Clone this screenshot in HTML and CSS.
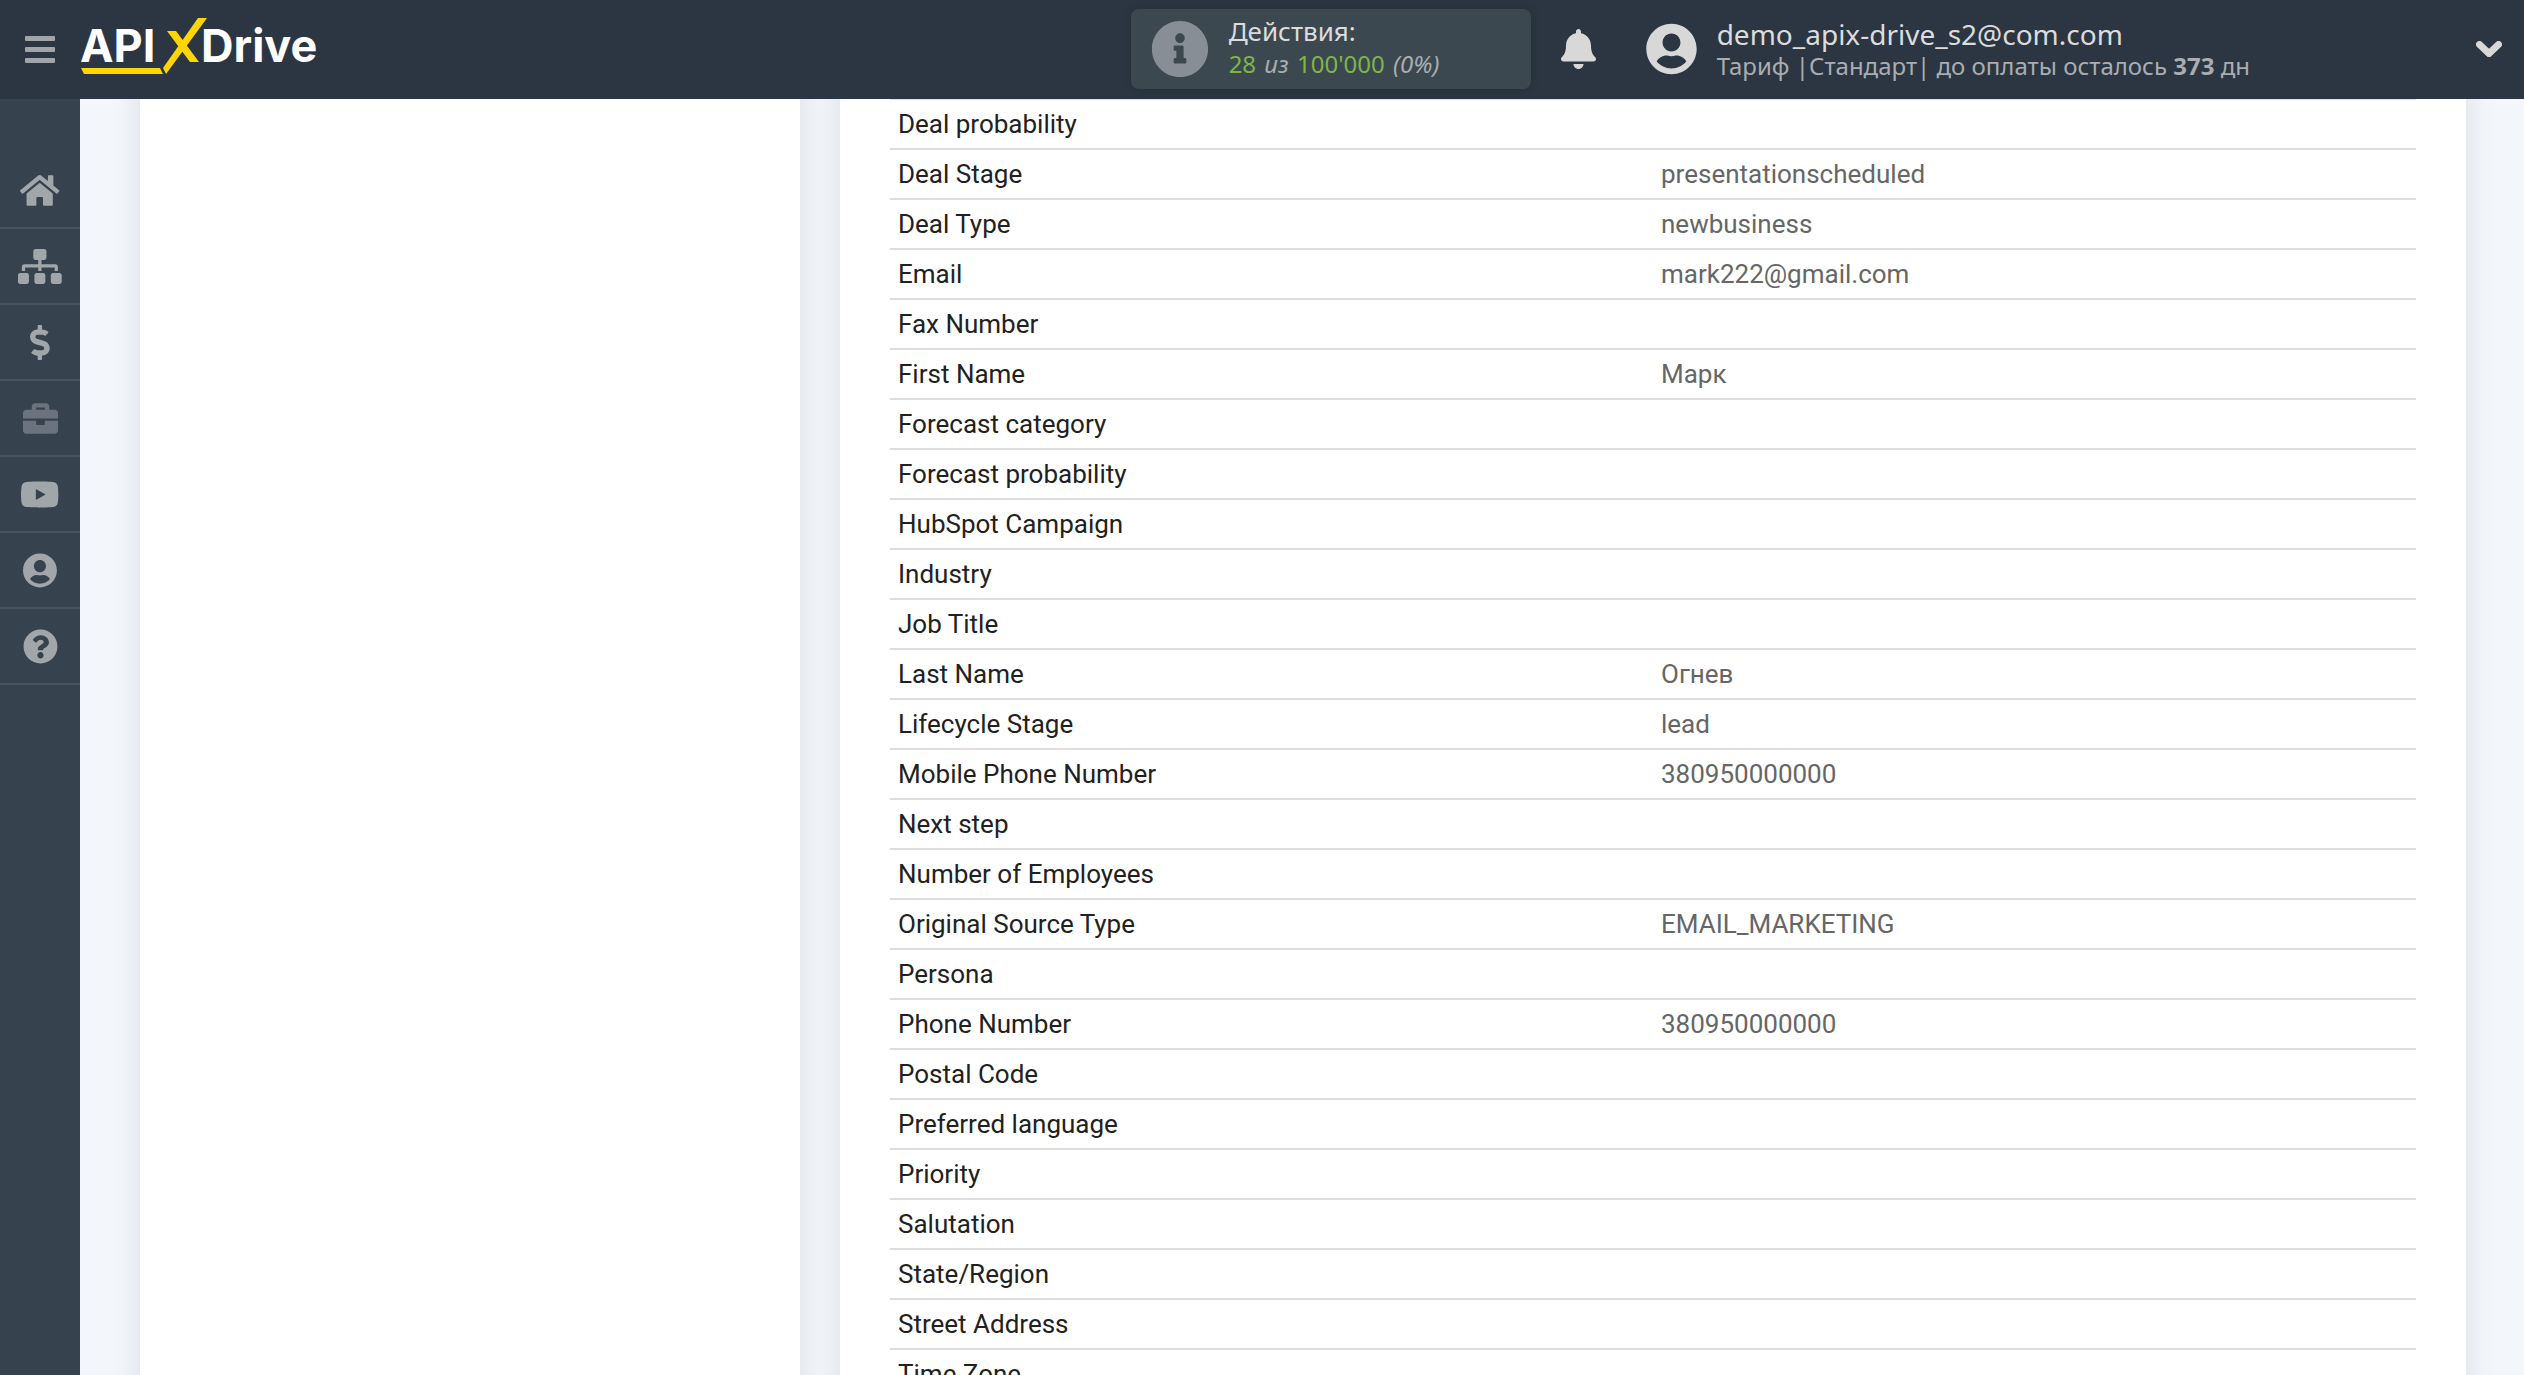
FILE: index.html
```html
<!DOCTYPE html>
<html lang="ru">
<head>
<meta charset="utf-8">
<meta name="viewport" content="width=device-width, initial-scale=1">
<title>APIXDrive</title>
<link rel="stylesheet" href="styles.css">
</head>
<body>
<div class="app">
  <header class="topbar">
    <div class="brand">
      <button class="burger" type="button" aria-label="Меню"><span></span><span></span><span></span></button>
      <a class="logo" href="#" aria-label="APIXDrive">
        <svg width="244" height="64" viewBox="0 0 244 64">
          <text class="logo-text" x="-1" y="45">API</text>
          <text class="logo-text" x="120" y="45">Drive</text>
          <path fill="#ffd600" d="M117 1h9L85 57l-3-6z"/>
          <path fill="#ffd600" d="M86 14h9l23 31h-9z"/>
          <path fill="#ffd600" d="M0 51h79l3 6H3z"/>
        </svg>
      </a>
    </div>
    <div class="usage">
      <svg class="usage-icon" viewBox="0 0 512 512"><path d="M256 8C119.043 8 8 119.083 8 256c0 136.997 111.043 248 248 248s248-111.003 248-248C504 119.083 392.957 8 256 8zm0 110c23.196 0 42 18.804 42 42s-18.804 42-42 42-42-18.804-42-42 18.804-42 42-42zm56 254c0 6.627-5.373 12-12 12h-88c-6.627 0-12-5.373-12-12v-24c0-6.627 5.373-12 12-12h12v-64h-12c-6.627 0-12-5.373-12-12v-24c0-6.627 5.373-12 12-12h64c6.627 0 12 5.373 12 12v100h12c6.627 0 12 5.373 12 12v24z"/></svg>
      <div class="usage-text">
        <div class="line-main">Действия:</div>
        <div class="line-sub"><b class="num">28</b> <i>из</i> <b class="num">100'000</b> <i>(0%)</i></div>
      </div>
    </div>
    <button class="bell" type="button" aria-label="Уведомления">
      <svg viewBox="0 0 448 512"><path d="M224 512c35.32 0 63.97-28.65 63.97-64H160.03c0 35.35 28.65 64 63.97 64zm215.39-149.71c-19.32-20.76-55.47-51.99-55.47-154.29 0-77.7-54.48-139.9-127.94-155.16V32c0-17.67-14.32-32-31.98-32s-31.98 14.33-31.98 32v20.84C118.56 68.1 64.08 130.3 64.08 208c0 102.3-36.15 133.53-55.47 154.29-6 6.45-8.66 14.16-8.61 21.71.11 16.4 12.98 32 32.1 32h383.8c19.12 0 32-15.6 32.1-32 .05-7.55-2.61-15.27-8.61-21.71z"/></svg>
    </button>
    <div class="account">
      <svg class="avatar" viewBox="0 0 496 512"><path d="M248 8C111 8 0 119 0 256s111 248 248 248 248-111 248-248S385 8 248 8zm0 96c48.6 0 88 39.4 88 88s-39.4 88-88 88-88-39.4-88-88 39.4-88 88-88zm0 344c-58.7 0-111.3-26.6-146.5-68.2 18.8-35.4 55.6-59.8 98.5-59.8 2.4 0 4.8.4 7.1 1.1 13 4.2 26.6 6.9 40.9 6.9 14.3 0 28-2.7 40.9-6.9 2.3-.7 4.7-1.1 7.1-1.1 42.9 0 79.7 24.4 98.5 59.8C359.3 421.4 306.7 448 248 448z"/></svg>
      <div class="account-text">
        <div class="line-main account-name">demo_apix-drive_s2@com.com</div>
        <div class="line-sub">Тариф |Стандарт| до оплаты осталось <strong>373</strong> дн</div>
      </div>
    </div>
    <button class="toggle" type="button" aria-label="Развернуть">
      <svg width="26" height="16" viewBox="0 0 26 16"><path d="M3.500 3.500L13 12.500l9.500-9" fill="none" stroke="#d8d8d8" stroke-width="7" stroke-linecap="round" stroke-linejoin="miter"/></svg>
    </button>
  </header>
  <div class="body">
    <nav class="sidebar" aria-label="Разделы">
      <a href="#" aria-label="Главная"><svg viewBox="0 0 576 512"><path d="M280.37 148.26L96 300.11V464a16 16 0 0 0 16 16l112.06-.29a16 16 0 0 0 15.92-16V368a16 16 0 0 1 16-16h64a16 16 0 0 1 16 16v95.64a16 16 0 0 0 16 16.05L464 480a16 16 0 0 0 16-16V300L295.67 148.26a12.19 12.19 0 0 0-15.3 0zM571.6 251.47L488 182.56V44.05a12 12 0 0 0-12-12h-56a12 12 0 0 0-12 12v72.61L318.47 43a48 48 0 0 0-61 0L4.34 251.47a12 12 0 0 0-1.6 16.9l25.5 31A12 12 0 0 0 45.15 301l235.22-193.74a12.19 12.19 0 0 1 15.3 0L530.9 301a12 12 0 0 0 16.9-1.6l25.5-31a12 12 0 0 0-1.7-16.93z"/></svg></a>
      <a href="#" aria-label="Связи"><svg viewBox="0 0 640 512"><path d="M128 352H32c-17.67 0-32 14.33-32 32v96c0 17.67 14.33 32 32 32h96c17.67 0 32-14.33 32-32v-96c0-17.67-14.33-32-32-32zm-24-80h192v48h48v-48h192v48h48v-57.59c0-21.17-17.23-38.41-38.41-38.41H344v-64h40c17.67 0 32-14.33 32-32V32c0-17.67-14.33-32-32-32H256c-17.67 0-32 14.33-32 32v96c0 17.67 14.33 32 32 32h40v64H94.41C73.23 224 56 241.23 56 262.41V320h48v-48zm264 80h-96c-17.67 0-32 14.33-32 32v96c0 17.67 14.33 32 32 32h96c17.67 0 32-14.33 32-32v-96c0-17.67-14.33-32-32-32zm240 0h-96c-17.67 0-32 14.33-32 32v96c0 17.67 14.33 32 32 32h96c17.67 0 32-14.33 32-32v-96c0-17.67-14.33-32-32-32z"/></svg></a>
      <a href="#" aria-label="Тарифы"><svg viewBox="0 0 288 512"><path d="M209.2 233.4l-108-31.6C88.700 198.200 80 186.500 80 173.500c0-16.300 13.200-29.500 29.500-29.500h66.300c12.200 0 24.200 3.700 34.200 10.500 6.100 4.100 14.300 3.100 19.500-2l34.800-34c7.100-6.900 6.100-18.400-1.800-24.500C238 74.800 207.400 64.100 176 64V16c0-8.800-7.200-16-16-16h-32c-8.800 0-16 7.200-16 16v48h-2.500C45.800 64-5.400 118.700.5 183.600c4.200 46.100 39.400 83.600 83.800 96.600l102.500 30c12.500 3.700 21.200 15.300 21.200 28.300 0 16.300-13.200 29.500-29.500 29.500h-66.300C100 368 88 364.300 78 357.500c-6.100-4.100-14.300-3.100-19.500 2l-34.800 34c-7.100 6.900-6.100 18.400 1.800 24.500 24.500 19.200 55.100 29.900 86.500 30v48c0 8.800 7.200 16 16 16h32c8.800 0 16-7.200 16-16v-48.200c46.600-.9 90.300-28.600 105.700-72.700 21.500-61.600-14.600-124.800-72.500-141.700z"/></svg></a>
      <a class="muted" href="#" aria-label="Проекты"><svg viewBox="0 0 512 512"><path d="M320 336c0 8.840-7.160 16-16 16h-96c-8.840 0-16-7.160-16-16v-48H0v144c0 25.600 22.400 48 48 48h416c25.600 0 48-22.400 48-48V288H320v48zm144-208h-80V80c0-25.600-22.400-48-48-48H176c-25.600 0-48 22.400-48 48v48H48c-25.600 0-48 22.400-48 48v80h512v-80c0-25.600-22.400-48-48-48zm-144 0H192V96h128v32z"/></svg></a>
      <a href="#" aria-label="Видео"><svg viewBox="0 0 576 512"><path d="M549.655 124.083c-6.281-23.650-24.787-42.276-48.284-48.597C458.781 64 288 64 288 64S117.220 64 74.629 75.486c-23.497 6.322-42.003 24.947-48.284 48.597-11.412 42.867-11.412 132.305-11.412 132.305s0 89.438 11.412 132.305c6.281 23.650 24.787 41.500 48.284 47.821C117.220 448 288 448 288 448s170.780 0 213.371-11.486c23.497-6.321 42.003-24.171 48.284-47.821 11.412-42.867 11.412-132.305 11.412-132.305s0-89.438-11.412-132.305zm-317.510 213.508V175.185l142.739 81.205-142.739 81.201z"/></svg></a>
      <a href="#" aria-label="Профиль"><svg viewBox="0 0 496 512"><path d="M248 8C111 8 0 119 0 256s111 248 248 248 248-111 248-248S385 8 248 8zm0 96c48.6 0 88 39.4 88 88s-39.4 88-88 88-88-39.4-88-88 39.4-88 88-88zm0 344c-58.7 0-111.3-26.6-146.5-68.2 18.8-35.4 55.6-59.8 98.5-59.8 2.4 0 4.8.4 7.1 1.1 13 4.2 26.6 6.9 40.9 6.9 14.3 0 28-2.7 40.9-6.9 2.3-.7 4.7-1.1 7.1-1.1 42.9 0 79.7 24.4 98.5 59.8C359.3 421.4 306.7 448 248 448z"/></svg></a>
      <a href="#" aria-label="Помощь"><svg viewBox="0 0 512 512"><path d="M504 256c0 136.997-111.043 248-248 248S8 392.997 8 256C8 119.083 119.043 8 256 8s248 111.083 248 248zM262.655 90c-54.497 0-89.255 22.957-116.549 63.758-3.536 5.286-2.353 12.415 2.715 16.258l34.699 26.310c5.205 3.947 12.621 3.008 16.665-2.122 17.864-22.658 30.113-35.797 57.303-35.797 20.429 0 45.698 13.148 45.698 32.958 0 14.976-12.363 22.667-32.534 33.976C247.128 238.528 216 254.941 216 296v4c0 6.627 5.373 12 12 12h56c6.627 0 12-5.373 12-12v-1.333c0-28.462 83.186-29.647 83.186-106.667 0-58.002-60.165-102-116.531-102zM256 338c-25.365 0-46 20.635-46 46 0 25.364 20.635 46 46 46s46-20.636 46-46c0-25.364-20.635-46-46-46z"/></svg></a>
    </nav>
    <main class="content">
      <section class="card"></section>
      <section class="card card-data">
        <table class="fields">
          <tbody>
            <tr><th scope="row">Deal probability</th><td></td></tr>
            <tr><th scope="row">Deal Stage</th><td>presentationscheduled</td></tr>
            <tr><th scope="row">Deal Type</th><td>newbusiness</td></tr>
            <tr><th scope="row">Email</th><td>mark222@gmail.com</td></tr>
            <tr><th scope="row">Fax Number</th><td></td></tr>
            <tr><th scope="row">First Name</th><td>Марк</td></tr>
            <tr><th scope="row">Forecast category</th><td></td></tr>
            <tr><th scope="row">Forecast probability</th><td></td></tr>
            <tr><th scope="row">HubSpot Campaign</th><td></td></tr>
            <tr><th scope="row">Industry</th><td></td></tr>
            <tr><th scope="row">Job Title</th><td></td></tr>
            <tr><th scope="row">Last Name</th><td>Огнев</td></tr>
            <tr><th scope="row">Lifecycle Stage</th><td>lead</td></tr>
            <tr><th scope="row">Mobile Phone Number</th><td>380950000000</td></tr>
            <tr><th scope="row">Next step</th><td></td></tr>
            <tr><th scope="row">Number of Employees</th><td></td></tr>
            <tr><th scope="row">Original Source Type</th><td>EMAIL_MARKETING</td></tr>
            <tr><th scope="row">Persona</th><td></td></tr>
            <tr><th scope="row">Phone Number</th><td>380950000000</td></tr>
            <tr><th scope="row">Postal Code</th><td></td></tr>
            <tr><th scope="row">Preferred language</th><td></td></tr>
            <tr><th scope="row">Priority</th><td></td></tr>
            <tr><th scope="row">Salutation</th><td></td></tr>
            <tr><th scope="row">State/Region</th><td></td></tr>
            <tr><th scope="row">Street Address</th><td></td></tr>
            <tr><th scope="row">Time Zone</th><td></td></tr>
          </tbody>
        </table>
      </section>
    </main>
  </div>
</div>
</body>
</html>
```
FILE: styles.css
```css
* { box-sizing: border-box; }

body {
  margin: 0;
  background: #f3f6fb;
  font-family: Roboto, "Liberation Sans", sans-serif;
}

svg { display: block; }

button {
  padding: 0;
  border: 0;
  background: none;
  cursor: pointer;
}

.app {
  display: flex;
  flex-direction: column;
  height: 100vh;
  overflow: hidden;
}

/* Top bar */
.topbar {
  position: relative;
  z-index: 1;
  display: flex;
  align-items: center;
  flex: none;
  height: 99px;
  padding: 0 22px 1px 0;
  background: #2b3642;
  font-family: "Noto Sans", "Open Sans", sans-serif;
}

.brand {
  display: flex;
  align-items: center;
  gap: 26px;
  flex: 1;
  padding-left: 25px;
}

.burger {
  display: grid;
  gap: 6px;
  width: 30px;
}

.burger span {
  height: 5px;
  border-radius: 1px;
  background: #a1a5aa;
}

.logo-text {
  fill: #fff;
  font-family: Inter, sans-serif;
  font-size: 45px;
  font-weight: 700;
}

.usage {
  display: flex;
  align-items: center;
  gap: 20px;
  width: 400px;
  height: 80px;
  padding: 0 20px;
  border-radius: 8px;
  background: #3b4850;
  box-shadow: 0 0 10px rgba(0, 0, 0, .15);
}

.usage-icon {
  width: 58px;
  height: 58px;
  fill: #878e96;
}

.usage-text { padding-bottom: 4px; }

.line-main {
  color: #dcdcdc;
  font-size: 26px;
  line-height: 34px;
  white-space: nowrap;
}

.line-sub {
  color: #a9adb1;
  font-size: 24px;
  line-height: 32px;
  white-space: nowrap;
}

.line-sub i { margin: 0 2px; }

.num {
  color: #7fb548;
  font-weight: 400;
}

.bell { margin-left: 30px; }

.bell svg {
  width: 35px;
  height: 40px;
  fill: #d8d8d8;
}

.account {
  display: flex;
  align-items: center;
  gap: 20px;
  margin-left: 50px;
}

.account-name {
  font-size: 28px;
  line-height: 32px;
}

.account-text { padding-top: 2px; }

.avatar {
  width: 51px;
  height: 52px;
  fill: #d8d8d8;
}

.toggle { margin-left: 226px; }

/* Side navigation */
.body {
  display: flex;
  flex: 1;
  min-height: 0;
}

.sidebar {
  flex: none;
  width: 80px;
  padding-top: 54px;
  background: #37424f;
}

.sidebar a {
  display: flex;
  align-items: center;
  justify-content: center;
  height: 76px;
  border-bottom: 2px solid #4a5561;
}

.sidebar svg {
  height: 35px;
  fill: #a1a6aa;
}

.sidebar .muted svg { fill: #6b747e; }

/* Content */
.content {
  display: grid;
  grid-template-columns: 330fr 813fr;
  gap: 40px;
  flex: 1;
  padding: 0 58px 0 60px;
  overflow: hidden;
}

.card {
  margin: -60px 0;
  background: #fff;
  box-shadow: 0 0 30px rgba(0, 0, 0, .1);
}

.card-data { padding: 60px 50px; }

.fields {
  width: 100%;
  border-top: 1px solid #dedede;
  border-spacing: 0;
  table-layout: fixed;
  font-size: 26px;
  line-height: 32px;
}

.fields th,
.fields td {
  height: 50px;
  padding: 8px;
  border-bottom: 2px solid #dedede;
  font-weight: 400;
  text-align: left;
}

.fields th { color: #212121; }
.fields td { color: #666; }
```
